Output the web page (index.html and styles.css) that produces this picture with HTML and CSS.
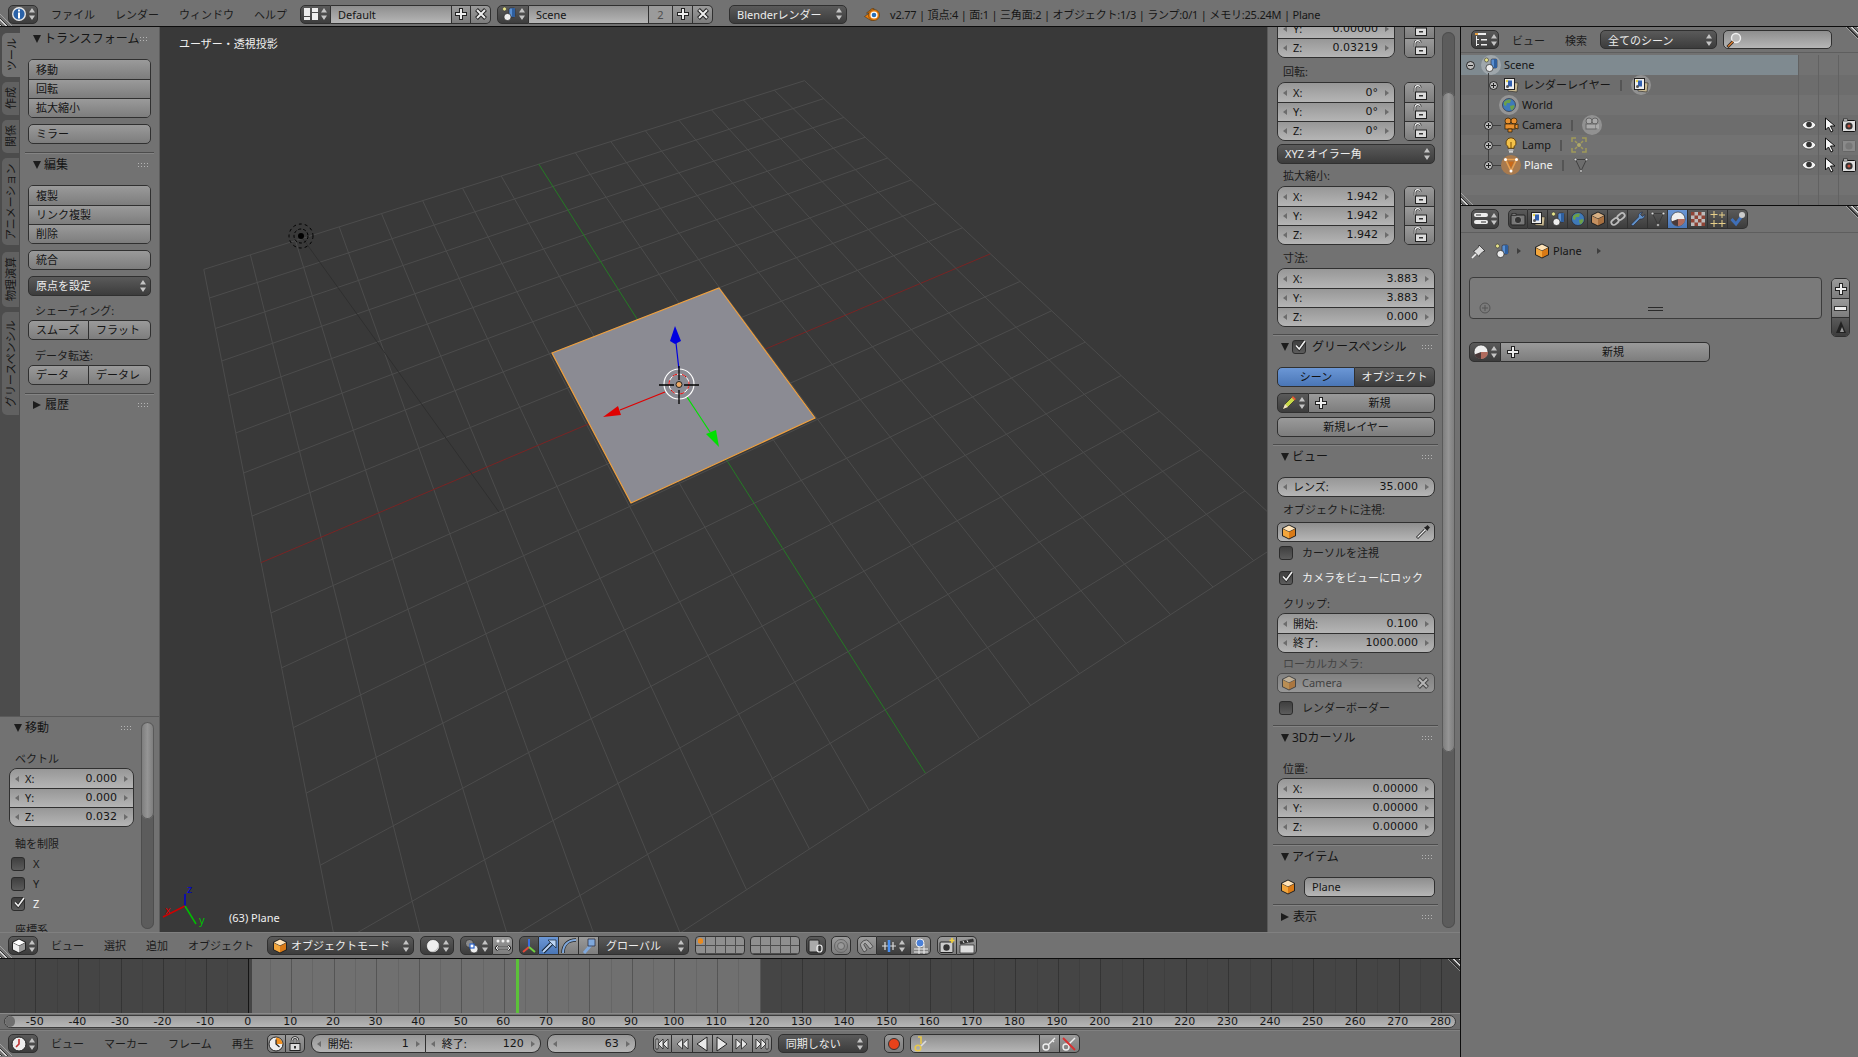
FILE: index.html
```html
<!DOCTYPE html>
<html lang="ja">
<head>
    <meta charset="UTF-8">
    <title>Blender</title>
    <link rel="stylesheet" href="styles.css">
</head>
<body>
<svg class="defs">
    <symbol id="ud" viewBox="0 0 8 14"><path fill="#c4c4c4" d="M4 1l3 4.5H1zM4 13L1 8.5h6z"/></symbol>
    <symbol id="info" viewBox="0 0 16 16"><circle cx="8" cy="8" r="7" fill="#e8e8e8"/><circle cx="8" cy="8" r="5.6" fill="#2a62a8"/><path fill="#fff" d="M7 3.5h2v2H7zM7 6.5h2v6H7z"/></symbol>
    <symbol id="layout" viewBox="0 0 16 16"><path fill="#eee" d="M1 2h6v8H1zM9 2h6v4H9zM9 7h6v7H9zM1 11h6v3H1z"/></symbol>
    <symbol id="scene" viewBox="0 0 16 16"><circle cx="3.5" cy="3" r="2" fill="#e8e48a" stroke="#333" stroke-width=".6"/><rect x="8" y="2" width="6" height="9" rx="1.5" fill="#5a8fd0" stroke="#223" stroke-width=".6"/><path fill="#2f5f9e" d="M11 2h3v9h-3z"/><circle cx="6.5" cy="11" r="3.6" fill="#eee" stroke="#222" stroke-width=".7"/></symbol>
    <symbol id="plus" viewBox="0 0 16 16"><path d="M8 2v12M2 8h12" stroke="#222" stroke-width="4"/><path d="M8 3v10M3 8h10" stroke="#eee" stroke-width="2"/></symbol>
    <symbol id="cross" viewBox="0 0 16 16"><path d="M3.5 3.5l9 9M12.5 3.5l-9 9" stroke="#222" stroke-width="4"/><path d="M4 4l8 8M12 4l-8 8" stroke="#eee" stroke-width="2"/></symbol>
    <symbol id="logo" viewBox="0 0 16 16"><path fill="#e87d0d" stroke="#3a2a10" stroke-width=".5" d="M.5 10.5L5.5 7H2.500L8 2.500h2v12H7z"/><circle cx="10" cy="9" r="5.5" fill="#e87d0d" stroke="#3a2a10" stroke-width=".5"/><circle cx="10" cy="9" r="3.6" fill="#fff"/><circle cx="10" cy="9" r="2.3" fill="#2a6fb8"/></symbol>
    <symbol id="cube" viewBox="0 0 16 16"><path fill="#222" d="M8 .5l7 3.5v8l-7 3.500-7-3.500V4z"/><path fill="#f3a63c" d="M2 5l6 3v6.500L2 11.500z"/><path fill="#d97a16" d="M14 5l-6 3v6.500l6-3z"/><path fill="#ffe3b8" d="M8 1.500L14 4.500 8 7.500 2 4.500z"/></symbol>
    <symbol id="view3d" viewBox="0 0 16 16"><path fill="#222" d="M8 .5l7 3.5v8l-7 3.500-7-3.500V4z"/><path fill="#eee" d="M2 5l6 3v6.500L2 11.500z"/><path fill="#999" d="M14 5l-6 3v6.500l6-3z"/><path fill="#fff" d="M8 1.500L14 4.500 8 7.500 2 4.500z"/></symbol>
    <symbol id="sphere" viewBox="0 0 16 16"><circle cx="8" cy="8" r="6.5" fill="#eee" stroke="#222" stroke-width=".6"/><path fill="#bbb" d="M13 4.500A6.500 6.500 0 0 1 4 13.100 7 7 0 0 0 13 4.500z"/></symbol>
    <symbol id="pivot" viewBox="0 0 16 16"><circle cx="5.5" cy="5.5" r="4" fill="#8a8a8a" stroke="#222" stroke-width=".6"/><circle cx="10" cy="11" r="4" fill="#eee" stroke="#222" stroke-width=".6"/><rect x="6" y="6" width="4" height="4" fill="#fff" stroke="#2a62c8" stroke-width="1.2"/></symbol>
    <symbol id="pivotrange" viewBox="0 0 16 16"><g fill="#eee"><circle cx="3" cy="3" r="1.5"/><circle cx="8" cy="3" r="1.5"/><circle cx="13" cy="3" r="1.5"/></g><path d="M1 10h14M3 8l-2 2 2 2M13 8l2 2-2 2" stroke="#222" stroke-width="2.5" fill="none"/><path d="M1 10h14M3 8l-2 2 2 2M13 8l2 2-2 2" stroke="#eee" stroke-width="1" fill="none"/></symbol>
    <symbol id="manxyz" viewBox="0 0 16 16"><path d="M8 9V1" stroke="#3a6fe0" stroke-width="2"/><path d="M8 9l-6 5" stroke="#e04a3a" stroke-width="2"/><path d="M8 9l6 5" stroke="#6fd040" stroke-width="2"/></symbol>
    <symbol id="manmove" viewBox="0 0 16 16"><path d="M2 14L12 4" stroke="#123" stroke-width="4"/><path d="M2 14L12 4" stroke="#bcd4f4" stroke-width="2"/><path fill="#bcd4f4" stroke="#123" stroke-width=".7" d="M7 2h8v8z"/></symbol>
    <symbol id="manrot" viewBox="0 0 16 16"><path d="M2 15C2 7 7 2 15 2" fill="none" stroke="#222" stroke-width="3.5"/><path d="M2 15C2 7 7 2 15 2" fill="none" stroke="#7fa8dc" stroke-width="2"/></symbol>
    <symbol id="manscale" viewBox="0 0 16 16"><path d="M3 15l7-8" stroke="#7fa8dc" stroke-width="3"/><path fill="#7fa8dc" stroke="#223" stroke-width=".7" d="M7 1h7v7H7z"/></symbol>
    <symbol id="unlock" viewBox="0 0 16 16"><path d="M3 7V3.500a2.800 2.800 0 0 1 5.500-.8" fill="none" stroke="#222" stroke-width="2.4"/><path d="M3 7V3.500a2.800 2.800 0 0 1 5.500-.8" fill="none" stroke="#eee" stroke-width="1.100"/><rect x="3.500" y="7" width="11" height="7.500" fill="#ddd" stroke="#222"/><path fill="#333" d="M7 10h4v1.500H7z"/></symbol>
    <symbol id="lock" viewBox="0 0 16 16"><path d="M5 8V4.500a3 3 0 0 1 6 0V8" fill="none" stroke="#222" stroke-width="2.4"/><path d="M5 8V4.500a3 3 0 0 1 6 0V8" fill="none" stroke="#eee" stroke-width="1"/><rect x="3" y="7.500" width="10" height="7" fill="#ddd" stroke="#222"/><path fill="#333" d="M7 10h2v2.500H7z"/></symbol>
    <symbol id="dropper" viewBox="0 0 16 16"><path d="M2 14l8-8" stroke="#222" stroke-width="3"/><path d="M2.500 13.500l8-8" stroke="#eee" stroke-width="1.200"/><path fill="#222" d="M9 3.500l2-1 1.500-1.500 2.500 2.500-1.500 1.500-1 2z"/></symbol>
    <symbol id="pencil" viewBox="0 0 16 16"><path d="M2 14l2-5 8-8 3 3-8 8z" fill="#c8d848" stroke="#2a2a2a" stroke-width=".7"/><path fill="#e05a3a" d="M12 1l3 3-1.500 1.500-3-3z"/><path fill="#f0e0c0" d="M2 14l2-5 3 3z"/></symbol>
    <symbol id="check" viewBox="0 0 14 14"><path d="M3 6.500l3.200 3.500L12 2" fill="none" stroke="#222" stroke-width="3.2"/><path d="M3 6.500l3.200 3.500L12 2" fill="none" stroke="#eee" stroke-width="1.7"/></symbol>
    <symbol id="eye" viewBox="0 0 16 16"><path fill="#f2f2f2" stroke="#222" stroke-width=".6" d="M1 8c2-3 4-4 7-4s5 1 7 4c-2 3-4 4-7 4s-5-1-7-4z"/><circle cx="8" cy="7.500" r="2.8" fill="#333"/></symbol>
    <symbol id="arrow" viewBox="0 0 16 16"><path fill="#f2f2f2" stroke="#111" d="M4.500 1v12l3-3 2.500 5 2-1-2.500-5H14z"/></symbol>
    <symbol id="camrend" viewBox="0 0 16 16"><rect x="1.500" y="3.500" width="13" height="11" rx="1" fill="#ddd" stroke="#111"/><rect x="2.500" y="2" width="4" height="2" fill="#ddd" stroke="#111" stroke-width=".6"/><circle cx="8" cy="9" r="3.6" fill="#333"/><circle cx="8" cy="9" r="1.6" fill="#c4523f"/></symbol>
    <symbol id="camoff" viewBox="0 0 16 16"><rect x="1.500" y="3.500" width="13" height="11" rx="1" fill="#8a8a8a" stroke="#666"/><circle cx="8" cy="9" r="3.6" fill="#777"/></symbol>
    <symbol id="globe" viewBox="0 0 16 16"><circle cx="8" cy="8" r="6.5" fill="#3f7ab8" stroke="#223" stroke-width=".6"/><path fill="#6ca04a" d="M3 5c2-2 5-3 7-2L9 6 6 6 5 9 3 8zM9 9l4-1 .5 2-2.500 3.500L9.500 12z"/></symbol>
    <symbol id="rlayer" viewBox="0 0 16 16"><path fill="#c8b890" stroke="#222" stroke-width=".6" d="M5 5l10 1-1 9-9-1z"/><rect x="1.500" y="1.500" width="10" height="11" fill="#eee" stroke="#222"/><path fill="#2f5fb0" d="M5 3.500h4v6H5z"/><circle cx="4" cy="4" r="1.2" fill="#e8d44a"/><circle cx="4.500" cy="9.500" r="1.5" fill="#555"/></symbol>
    <symbol id="cam3d" viewBox="0 0 16 16"><circle cx="5" cy="4" r="3" fill="#e89030" stroke="#2a1a00" stroke-width=".7"/><circle cx="11" cy="4" r="3" fill="#e89030" stroke="#2a1a00" stroke-width=".7"/><rect x="2" y="7" width="10" height="5" fill="#e89030" stroke="#2a1a00" stroke-width=".7"/><path fill="#e89030" stroke="#2a1a00" stroke-width=".7" d="M12 8l3-1v5l-3-1zM5 12h4v3H5z"/></symbol>
    <symbol id="lamp" viewBox="0 0 16 16"><path fill="#f4c24a" stroke="#4a2c00" stroke-width=".8" d="M8 .8a5 5 0 0 1 3 9v1.500H5V9.800a5 5 0 0 1 3-9z"/><path d="M5.500 13h5M6 14.800h4" stroke="#eee" stroke-width="1.2"/><path d="M8 5v6" stroke="#7a4c00"/></symbol>
    <symbol id="tri" viewBox="0 0 16 16"><path d="M2.500 2.500h11L8 14z" fill="none" stroke="#e8a050" stroke-width="1.6"/><path d="M5 4.500h6L8 11z" fill="#c96a1a"/><g fill="#fff"><circle cx="2.500" cy="2.500" r="1.5"/><circle cx="13.500" cy="2.500" r="1.5"/><circle cx="8" cy="14" r="1.5"/></g></symbol>
    <symbol id="trigrey" viewBox="0 0 16 16"><path d="M2.500 2.500h11L8 14z" fill="none" stroke="#333" stroke-width=".8"/><g fill="#ddd" stroke="#333" stroke-width=".5"><circle cx="2.500" cy="2.500" r="1.3"/><circle cx="13.500" cy="2.500" r="1.3"/><circle cx="8" cy="14" r="1.3"/></g></symbol>
    <symbol id="lampdata" viewBox="0 0 16 16"><g stroke="#a09a5a" stroke-width="1.5" fill="none"><path d="M1 5V1h4M11 1h4v4M1 11v4h4M15 11v4h-4"/><path d="M4 4l2 2M12 4l-2 2M4 12l2-2M12 12l-2-2"/></g><circle cx="8" cy="8" r="2" fill="#b0aa6a"/></symbol>
    <symbol id="camdata" viewBox="0 0 16 16"><circle cx="5" cy="4" r="3" fill="#aaa" stroke="#666"/><circle cx="11" cy="4" r="3" fill="#aaa" stroke="#666"/><rect x="2" y="7" width="10" height="5" fill="#aaa" stroke="#666"/><path fill="#aaa" d="M12 8l3-1v5l-3-1z"/></symbol>
    <symbol id="outliner" viewBox="0 0 16 16"><path fill="#eee" d="M2 1h11v2H2zM3 4h1v10H3z"/><path fill="#eee" d="M4 7h2v1H4zM8 7h6v1.500H8zM4 12h2v1H4zM8 12h6v1.500H8z"/><path fill="#e8a040" d="M2 1h3v2H2z"/></symbol>
    <symbol id="search" viewBox="0 0 16 16"><circle cx="10" cy="6" r="4.5" fill="#b8b8b8" stroke="#eee" stroke-width="1.4"/><path d="M7 9.500L1.500 15" stroke="#222" stroke-width="3"/><path d="M7 9.500L2 14.500" stroke="#d87a30" stroke-width="1.6"/></symbol>
    <symbol id="props" viewBox="0 0 16 16"><rect x="1" y="2" width="14" height="4" rx="2" fill="#eee"/><rect x="1" y="9" width="14" height="4" rx="2" fill="#eee"/><path fill="#333" d="M3 3.500h5v1H3zM8 10.500h5v1H8z"/></symbol>
    <symbol id="pcam" viewBox="0 0 16 16"><rect x="1" y="4" width="14" height="10" rx="1" fill="#777" stroke="#222"/><rect x="2" y="2.500" width="4" height="2" fill="#777" stroke="#222" stroke-width=".6"/><circle cx="8" cy="9" r="3.6" fill="#333" stroke="#aaa" stroke-width=".6"/></symbol>
    <symbol id="pcube" viewBox="0 0 16 16"><path fill="#222" d="M8 .5l7 3.5v8l-7 3.500-7-3.500V4z"/><path fill="#c49060" d="M2 5l6 3v6.500L2 11.500z"/><path fill="#a87040" d="M14 5l-6 3v6.500l6-3z"/><path fill="#d8b084" d="M8 1.500L14 4.500 8 7.500 2 4.500z"/></symbol>
    <symbol id="link" viewBox="0 0 16 16"><g fill="none" stroke="#bbb" stroke-width="1.8"><rect x="1" y="8" width="8" height="5" rx="2.5" transform="rotate(-40 5 10.500)"/><rect x="7" y="3" width="8" height="5" rx="2.5" transform="rotate(-40 11 5.500)"/></g></symbol>
    <symbol id="wrench" viewBox="0 0 16 16"><path fill="#5f90c8" stroke="#223" stroke-width=".6" d="M1 13.500l7.500-7.500C8 4 9 1.500 12.500 1L10.500 3.500l2 2 2.500-2C15 7 12 8.500 10 8l-7 7z"/></symbol>
    <symbol id="material" viewBox="0 0 16 16"><circle cx="8" cy="8" r="7" fill="#eee" stroke="#222" stroke-width=".6"/><path fill="#b06a5c" d="M8 8h7a7 7 0 0 1-7 7z"/><path fill="#4a3a3a" d="M8 8v7a7 7 0 0 1-6.500-4.500z"/></symbol>
    <symbol id="checker" viewBox="0 0 16 16"><path fill="#bbb" d="M1 1h14v14H1z"/><path fill="#8f4436" d="M1 1h3.500v3.500H1zM8 1h3.500v3.500H8zM4.500 4.500H8V8H4.500zM11.500 4.500H15V8h-3.500zM1 8h3.500v3.500H1zM8 8h3.500v3.500H8zM4.500 11.500H8V15H4.500zM11.500 11.500H15V15h-3.500z"/></symbol>
    <symbol id="sparks" viewBox="0 0 16 16"><path d="M4 0v7M.5 3.500h7M12 1v6M9 4h6M4 9v7M.5 12.500h7M12 9v7M8.500 12.500h7" stroke="#e8d08a" stroke-width="1"/></symbol>
    <symbol id="bone" viewBox="0 0 16 16"><path d="M1.500 8l4.500 5 6-8" fill="none" stroke="#3f6fb8" stroke-width="3"/><circle cx="12" cy="4" r="3" fill="#ccc"/></symbol>
    <symbol id="pin" viewBox="0 0 16 16"><path d="M1 15l5-5" stroke="#eee" stroke-width="1.6"/><path fill="#ddd" stroke="#222" stroke-width=".7" d="M8 2l6 6-2 .5-3 3-1 2L2.500 8l2-1 3-3z"/></symbol>
    <symbol id="mouse" viewBox="0 0 16 16"><path fill="#222" d="M3 14L8 2l5 12z"/><path fill="#999" d="M9 8l2 5H7z"/></symbol>
    <symbol id="clock" viewBox="0 0 16 16"><circle cx="8" cy="8" r="7" fill="#eee" stroke="#222"/><path fill="#f09020" d="M8 8V1.500A6.500 6.500 0 0 1 14.500 8z"/><path d="M8 3.500V8l3.500 3" fill="none" stroke="#222" stroke-width="1.2"/></symbol>
    <symbol id="clockred" viewBox="0 0 16 16"><circle cx="8" cy="8" r="7" fill="#eee" stroke="#222"/><path d="M8 3v5l-3 3" fill="none" stroke="#c03030" stroke-width="1.6"/></symbol>
    <symbol id="jumpstart" viewBox="0 0 16 16"><path fill="#e8e8e8" stroke="#222" stroke-width=".8" d="M2 3h2v10H2zM14 3v10L9 8zM9 3v10L4 8z"/></symbol>
    <symbol id="rewind" viewBox="0 0 16 16"><path fill="#e8e8e8" stroke="#222" stroke-width=".8" d="M14 3v10L8.500 8zM8.500 3v10L3 8z"/></symbol>
    <symbol id="playrev" viewBox="0 0 16 16"><path fill="#e8e8e8" stroke="#222" d="M13 1v14L3 8z"/></symbol>
    <symbol id="play" viewBox="0 0 16 16"><path fill="#e8e8e8" stroke="#222" d="M3 1v14l10-7z"/></symbol>
    <symbol id="forward" viewBox="0 0 16 16"><path fill="#e8e8e8" stroke="#222" stroke-width=".8" d="M2 3v10l5.500-5zM7.500 3v10L13 8z"/></symbol>
    <symbol id="jumpend" viewBox="0 0 16 16"><path fill="#e8e8e8" stroke="#222" stroke-width=".8" d="M12 3h2v10h-2zM2 3v10l5-5zM7 3v10l5-5z"/></symbol>
    <symbol id="rec" viewBox="0 0 16 16"><circle cx="8" cy="8" r="5.5" fill="#e8421a" stroke="#333"/></symbol>
    <symbol id="keygold" viewBox="0 0 16 16"><path d="M5 1h3v7" fill="none" stroke="#e8c84a" stroke-width="1.6"/><circle cx="5" cy="12" r="2.8" fill="none" stroke="#e8c84a" stroke-width="1.6"/><path d="M8 10l5-5" stroke="#ddd" stroke-width="1.6"/></symbol>
    <symbol id="key" viewBox="0 0 16 16"><circle cx="5" cy="11" r="3" fill="none" stroke="#eee" stroke-width="1.4"/><path d="M7 9l7-7M11 4l2 2" stroke="#eee" stroke-width="1.4"/></symbol>
    <symbol id="keyx" viewBox="0 0 16 16"><circle cx="5" cy="11" r="3" fill="none" stroke="#eee" stroke-width="1.4"/><path d="M7 9l7-7" stroke="#eee" stroke-width="1.4"/><path d="M2 2l12 12" stroke="#d83030" stroke-width="2"/></symbol>
    <symbol id="camlock" viewBox="0 0 16 16"><rect x="1" y="2" width="10" height="12" rx="1" fill="#aaa" stroke="#222"/><rect x="9" y="7" width="5" height="7" rx="2.5" fill="none" stroke="#eee" stroke-width="1.2"/></symbol>
    <symbol id="occlude" viewBox="0 0 16 16"><circle cx="8" cy="8" r="6.5" fill="none" stroke="#666"/><circle cx="8" cy="8" r="3.5" fill="#999" stroke="#666"/></symbol>
    <symbol id="magnet" viewBox="0 0 16 16"><path d="M5 14L2 9a4 4 0 0 1 1-5l2-1.500a4 4 0 0 1 5 1l4 5-3 2.500-4-5a1 1 0 0 0-2 1l3 5z" fill="#aaa" stroke="#333" stroke-width=".7"/></symbol>
    <symbol id="snapmode" viewBox="0 0 16 16"><path d="M1 8h14" stroke="#ddd"/><path d="M4 4v8M12 4v8" stroke="#ddd" stroke-width="1.2"/><path d="M8 2v12" stroke="#4a90f0" stroke-width="2.5"/></symbol>
    <symbol id="snapgrid" viewBox="0 0 16 16"><path d="M1 11h14M1 14h14M6 6v10M11 6v10" stroke="#eee"/><circle cx="7" cy="5" r="4" fill="#4a80d8" stroke="#eee"/></symbol>
    <symbol id="renderimg" viewBox="0 0 16 16"><rect x="1" y="4" width="13" height="10.500" rx="1" fill="#ccc" stroke="#222"/><circle cx="7.500" cy="9.500" r="3.2" fill="#333"/><path d="M13 0v5M10.500 2.500h5" stroke="#f0d040" stroke-width="1.6"/></symbol>
    <symbol id="renderanim" viewBox="0 0 16 16"><path fill="#ddd" stroke="#222" stroke-width=".7" d="M1 7h14v8H1z"/><path fill="#333" stroke="#222" stroke-width=".5" d="M1 3.500L14 1l.5 2.500L1.500 6z"/><path d="M4 3l1 2M8 2.300l1 2" stroke="#eee"/></symbol>
    <symbol id="addsm" viewBox="0 0 12 12"><circle cx="6" cy="6" r="5" fill="none" stroke="#555"/><path d="M6 3v6M3 6h6" stroke="#555"/></symbol>
</svg>

<header class="hdr top">
    <span class="corner bl"></span>
    <div class="wg dark w30 ed"><svg class="ic"><use href="#info"/></svg><svg class="ud"><use href="#ud"/></svg></div>
    <nav class="menu"><span>ファイル</span><span>レンダー</span><span>ウィンドウ</span><span>ヘルプ</span></nav>
    <div class="group">
        <div class="wg dark w31 ed"><svg class="ic"><use href="#layout"/></svg><svg class="ud"><use href="#ud"/></svg></div>
        <div class="wg field w121 pad"><span>Default</span></div>
        <div class="wg tool w19 ctr"><svg class="ic"><use href="#plus"/></svg></div>
        <div class="wg tool w20 ctr"><svg class="ic"><use href="#cross"/></svg></div>
    </div>
    <div class="group ml6">
        <div class="wg dark w32 ed"><svg class="ic"><use href="#scene"/></svg><svg class="ud"><use href="#ud"/></svg></div>
        <div class="wg field w120 pad"><span>Scene</span></div>
        <div class="wg field w24 ctr users"><span>2</span></div>
        <div class="wg tool w20 ctr"><svg class="ic"><use href="#plus"/></svg></div>
        <div class="wg tool w20 ctr"><svg class="ic"><use href="#cross"/></svg></div>
    </div>
    <div class="wg dark dd w118 ml16"><span>Blenderレンダー</span><svg class="ud"><use href="#ud"/></svg></div>
    <svg class="ic logo"><use href="#logo"/></svg>
    <span class="status">v2.77 | 頂点:4 | 面:1 | 三角面:2 | オブジェクト:1/3 | ランプ:0/1 | メモリ:25.24M | Plane</span>
</header>

<div class="workspace">
    <div class="left">
        <div class="main">
            <div class="tools">
                <div class="tools-top">
                    <div class="tabs">
                        <span class="tab on h44">ツール</span>
                        <span class="tab h33">作成</span>
                        <span class="tab h33">関係</span>
                        <span class="tab h87">アニメーション</span>
                        <span class="tab h55 g7">物理演算</span>
                        <span class="tab h103">グリースペンシル</span>
                    </div>
                    <div class="tpanel">
                        <div class="ph first"><i class="arr"></i><b>トランスフォーム</b><i class="grip"></i></div>
                        <div class="col">
                            <div class="row tool">移動</div>
                            <div class="row tool">回転</div>
                            <div class="row tool">拡大縮小</div>
                        </div>
                        <div class="wg tool pad mt6">ミラー</div>
                        <div class="sep"></div>
                        <div class="ph"><i class="arr"></i><b>編集</b><i class="grip"></i></div>
                        <div class="col">
                            <div class="row tool">複製</div>
                            <div class="row tool">リンク複製</div>
                            <div class="row tool">削除</div>
                        </div>
                        <div class="wg tool pad mt6">統合</div>
                        <div class="wg dark dd mt6"><span>原点を設定</span><svg class="ud"><use href="#ud"/></svg></div>
                        <div class="lbl mt8 mb2">シェーディング:</div>
                        <div class="group">
                            <div class="wg tool pad w61">スムーズ</div>
                            <div class="wg tool pad fill">フラット</div>
                        </div>
                        <div class="lbl mt9 mb2">データ転送:</div>
                        <div class="group">
                            <div class="wg tool pad w61">データ</div>
                            <div class="wg tool pad fill">データレ</div>
                        </div>
                        <div class="sep"></div>
                        <div class="ph last"><i class="arr closed"></i><b>履歴</b><i class="grip"></i></div>
                    </div>
                </div>
                <div class="redo">
                    <span class="scroll redo-scroll"><i class="thumb"></i></span>
                    <div class="ph"><i class="arr"></i><b>移動</b><i class="grip"></i></div>
                    <div class="lbl mt13 mb2">ベクトル</div>
                    <div class="col round">
                        <div class="row num"><span class="lab">X:</span><span class="val">0.000</span></div>
                        <div class="row num"><span class="lab">Y:</span><span class="val">0.000</span></div>
                        <div class="row num"><span class="lab">Z:</span><span class="val">0.032</span></div>
                    </div>
                    <div class="lbl mt10 mb3">軸を制限</div>
                    <div class="cbrow"><span class="cb"></span><span>X</span></div>
                    <div class="cbrow"><span class="cb"></span><span>Y</span></div>
                    <div class="cbrow lit"><span class="cb"><svg><use href="#check"/></svg></span><span>Z</span></div>
                    <div class="lbl mt9">座標系</div>
                </div>
            </div>

            <div class="viewport">
                <svg class="scene3d" viewBox="160 27 1108 905">
                    <g id="grid"></g>
                    <g class="lampobj">
                        <path d="M301 236L499 512" stroke="#2f2f2f" fill="none"/>
                        <circle cx="301" cy="236" r="3" fill="#000"/>
                        <circle cx="301" cy="236" r="7" fill="none" stroke="#000" stroke-dasharray="3 2"/>
                        <circle cx="301" cy="236" r="12" fill="none" stroke="#000" stroke-dasharray="3 3"/>
                    </g>
                    <path d="M719 288L815 418 631 503 552 353z" fill="#8b8b93" stroke="#f1a13e" stroke-width="1.2"/>
                    <path d="M679 370L676 343" stroke="#0000e0" stroke-width="1.2"/>
                    <path fill="#0000e0" d="M675 326L681 341 675 344 670 341z"/>
                    <path d="M665 392L620 410" stroke="#e00000" stroke-width="1.2"/>
                    <path fill="#e00000" d="M603 417L618 406 621 415z"/>
                    <path d="M687 397L710 432" stroke="#00e000" stroke-width="1.2"/>
                    <path fill="#00e000" d="M719 447L706 434 716 430z"/>
                    <circle cx="679" cy="384" r="15" fill="none" stroke="#fff" stroke-width="1.2"/>
                    <circle cx="679" cy="384" r="10" fill="none" stroke="#fff"/>
                    <circle cx="679" cy="384" r="10" fill="none" stroke="#e00000" stroke-dasharray="5 5"/>
                    <path d="M659 385h15M684 385h15M679 366v14M679 390v14" stroke="#000" stroke-width="1.3"/>
                    <circle cx="679" cy="384.500" r="3" fill="#eeaa66" stroke="#222"/>
                    <path d="M185 906V894" stroke="#0000d0" stroke-width="1.5"/>
                    <path d="M185 906L163 917" stroke="#d00000" stroke-width="1.5"/>
                    <path d="M185 906L196 924" stroke="#00c000" stroke-width="1.5"/>
                    <text class="axl" x="187" y="893" fill="#0000d0">z</text>
                    <text class="axl" x="165" y="914" fill="#d00000">x</text>
                    <text class="axl" x="199" y="924" fill="#00c000">y</text>
                </svg>
                <span class="vp-title">ユーザー・透視投影</span>
                <span class="vp-obj">(63) Plane</span>
            </div>

            <aside class="npanel">
                <span class="scroll n-scroll"><i class="thumb"></i></span>
                <div class="xf first">
                    <div class="col round">
                        <div class="row num"><span class="lab">Y:</span><span class="val">0.00000</span></div>
                        <div class="row num"><span class="lab">Z:</span><span class="val">0.03219</span></div>
                    </div>
                    <div class="col">
                        <div class="row tool ctr"><svg class="ic"><use href="#unlock"/></svg></div>
                        <div class="row tool ctr"><svg class="ic"><use href="#unlock"/></svg></div>
                    </div>
                </div>
                <div class="lbl nl">回転:</div>
                <div class="xf">
                    <div class="col round">
                        <div class="row num"><span class="lab">X:</span><span class="val">0°</span></div>
                        <div class="row num"><span class="lab">Y:</span><span class="val">0°</span></div>
                        <div class="row num"><span class="lab">Z:</span><span class="val">0°</span></div>
                    </div>
                    <div class="col">
                        <div class="row tool ctr"><svg class="ic"><use href="#unlock"/></svg></div>
                        <div class="row tool ctr"><svg class="ic"><use href="#unlock"/></svg></div>
                        <div class="row tool ctr"><svg class="ic"><use href="#unlock"/></svg></div>
                    </div>
                </div>
                <div class="wg dark dd mt3"><span>XYZ オイラー角</span><svg class="ud"><use href="#ud"/></svg></div>
                <div class="lbl nl tight">拡大縮小:</div>
                <div class="xf">
                    <div class="col round">
                        <div class="row num"><span class="lab">X:</span><span class="val">1.942</span></div>
                        <div class="row num"><span class="lab">Y:</span><span class="val">1.942</span></div>
                        <div class="row num"><span class="lab">Z:</span><span class="val">1.942</span></div>
                    </div>
                    <div class="col">
                        <div class="row tool ctr"><svg class="ic"><use href="#unlock"/></svg></div>
                        <div class="row tool ctr"><svg class="ic"><use href="#unlock"/></svg></div>
                        <div class="row tool ctr"><svg class="ic"><use href="#unlock"/></svg></div>
                    </div>
                </div>
                <div class="lbl nl mt6">寸法:</div>
                <div class="col round">
                    <div class="row num"><span class="lab">X:</span><span class="val">3.883</span></div>
                    <div class="row num"><span class="lab">Y:</span><span class="val">3.883</span></div>
                    <div class="row num"><span class="lab">Z:</span><span class="val">0.000</span></div>
                </div>

                <div class="sep ns"></div>
                <div class="ph nh"><i class="arr"></i><span class="cb hcb"><svg><use href="#check"/></svg></span><b>グリースペンシル</b><i class="grip"></i></div>
                <div class="group">
                    <div class="wg blue ctr w78">シーン</div>
                    <div class="wg dark ctr fill">オブジェクト</div>
                </div>
                <div class="group mt6">
                    <div class="wg dark w32 ed"><svg class="ic"><use href="#pencil"/></svg><svg class="ud"><use href="#ud"/></svg></div>
                    <div class="wg tool fill addnew"><svg class="ic"><use href="#plus"/></svg><span>新規</span></div>
                </div>
                <div class="wg tool ctr mt4">新規レイヤー</div>

                <div class="sep ns"></div>
                <div class="ph nh"><i class="arr"></i><b>ビュー</b><i class="grip"></i></div>
                <div class="wg num single"><span class="lab">レンズ:</span><span class="val">35.000</span></div>
                <div class="lbl nl mt6 mb5">オブジェクトに注視:</div>
                <div class="wg field picker"><svg class="ic"><use href="#cube"/></svg><svg class="ic"><use href="#dropper"/></svg></div>
                <div class="cbrow nc mt1"><span class="cb"></span><span>カーソルを注視</span></div>
                <div class="cbrow nc lit mt5"><span class="cb"><svg><use href="#check"/></svg></span><span>カメラをビューにロック</span></div>
                <div class="lbl nl mt9 mb2">クリップ:</div>
                <div class="col round">
                    <div class="row num"><span class="lab">開始:</span><span class="val">0.100</span></div>
                    <div class="row num"><span class="lab">終了:</span><span class="val">1000.000</span></div>
                </div>
                <div class="lbl nl off mt4 mb2">ローカルカメラ:</div>
                <div class="wg field picker off"><svg class="ic"><use href="#cube"/></svg><span class="pick-name">Camera</span><svg class="ic"><use href="#cross"/></svg></div>
                <div class="cbrow nc mt5"><span class="cb"></span><span>レンダーボーダー</span></div>

                <div class="sep ns"></div>
                <div class="ph nh"><i class="arr"></i><b>3Dカーソル</b><i class="grip"></i></div>
                <div class="lbl nl mt13 mb2">位置:</div>
                <div class="col round">
                    <div class="row num"><span class="lab">X:</span><span class="val">0.00000</span></div>
                    <div class="row num"><span class="lab">Y:</span><span class="val">0.00000</span></div>
                    <div class="row num"><span class="lab">Z:</span><span class="val">0.00000</span></div>
                </div>

                <div class="sep ns"></div>
                <div class="ph nh"><i class="arr"></i><b>アイテム</b><i class="grip"></i></div>
                <div class="item"><svg class="ic"><use href="#cube"/></svg><div class="wg field pad fill">Plane</div></div>

                <div class="sep ns"></div>
                <div class="ph nh"><i class="arr closed"></i><b>表示</b><i class="grip"></i></div>
                <div class="sep ns near"></div>
            </aside>
        </div>

        <div class="hdr h3d">
            <span class="corner bl"></span>
            <div class="wg dark w30 ed"><svg class="ic"><use href="#view3d"/></svg><svg class="ud"><use href="#ud"/></svg></div>
            <nav class="menu"><span>ビュー</span><span>選択</span><span>追加</span><span>オブジェクト</span></nav>
            <div class="wg dark dd w147 modesel"><svg class="ic"><use href="#cube"/></svg><span>オブジェクトモード</span><svg class="ud"><use href="#ud"/></svg></div>
            <div class="wg dark w34 ed ml6"><svg class="ic"><use href="#sphere"/></svg><svg class="ud"><use href="#ud"/></svg></div>
            <div class="group ml6">
                <div class="wg dark w33 ed"><svg class="ic"><use href="#pivot"/></svg><svg class="ud"><use href="#ud"/></svg></div>
                <div class="wg tool w20 ctr"><svg class="ic"><use href="#pivotrange"/></svg></div>
            </div>
            <div class="group ml6">
                <div class="wg dark w20 ctr"><svg class="ic"><use href="#manxyz"/></svg></div>
                <div class="wg blue w20 ctr"><svg class="ic"><use href="#manmove"/></svg></div>
                <div class="wg tool w20 ctr"><svg class="ic"><use href="#manrot"/></svg></div>
                <div class="wg tool w20 ctr"><svg class="ic"><use href="#manscale"/></svg></div>
                <div class="wg dark dd w90"><span>グローバル</span><svg class="ud"><use href="#ud"/></svg></div>
            </div>
            <div class="layers ml6"><i class="has"></i><i></i><i></i><i></i><i></i><i></i><i></i><i></i><i></i><i></i></div>
            <div class="layers ml5"><i></i><i></i><i></i><i></i><i></i><i></i><i></i><i></i><i></i><i></i></div>
            <div class="wg dark w20 ctr ml6"><svg class="ic"><use href="#camlock"/></svg></div>
            <div class="wg tool w20 ctr ml5"><svg class="ic"><use href="#occlude"/></svg></div>
            <div class="group ml6">
                <div class="wg tool w20 ctr"><svg class="ic"><use href="#magnet"/></svg></div>
                <div class="wg dark w34 ed"><svg class="ic"><use href="#snapmode"/></svg><svg class="ud"><use href="#ud"/></svg></div>
                <div class="wg tool w20 ctr"><svg class="ic"><use href="#snapgrid"/></svg></div>
            </div>
            <div class="group ml6">
                <div class="wg tool w20 ctr"><svg class="ic"><use href="#renderimg"/></svg></div>
                <div class="wg tool w20 ctr"><svg class="ic"><use href="#renderanim"/></svg></div>
            </div>
        </div>

        <div class="timeline"><i class="playhead"></i><span class="corner tr"></span></div>
        <div class="ruler">
            <div class="pill"><i class="knob"></i>
                <span>-50</span><span>-40</span><span>-30</span><span>-20</span><span>-10</span><span>0</span><span>10</span><span>20</span><span>30</span><span>40</span><span>50</span><span>60</span><span>70</span><span>80</span><span>90</span><span>100</span><span>110</span><span>120</span><span>130</span><span>140</span><span>150</span><span>160</span><span>170</span><span>180</span><span>190</span><span>200</span><span>210</span><span>220</span><span>230</span><span>240</span><span>250</span><span>260</span><span>270</span><span>280</span>
            </div>
        </div>
        <div class="hdr htl">
            <span class="corner bl"></span>
            <div class="wg dark w30 ed"><svg class="ic"><use href="#clockred"/></svg><svg class="ud"><use href="#ud"/></svg></div>
            <nav class="menu"><span>ビュー</span><span>マーカー</span><span>フレーム</span><span>再生</span></nav>
            <div class="group">
                <div class="wg tool w19 ctr"><svg class="ic"><use href="#clock"/></svg></div>
                <div class="wg tool w19 ctr"><svg class="ic"><use href="#lock"/></svg></div>
            </div>
            <div class="group ml6 col-frames">
                <div class="wg num w115"><span class="lab">開始:</span><span class="val">1</span></div>
                <div class="wg num w115"><span class="lab">終了:</span><span class="val">120</span></div>
            </div>
            <div class="wg num single w89 ml6"><span class="val">63</span></div>
            <div class="group transport">
                <div class="wg tool w19 ctr"><svg class="ic"><use href="#jumpstart"/></svg></div>
                <div class="wg tool w21 ctr"><svg class="ic"><use href="#rewind"/></svg></div>
                <div class="wg tool w20 ctr"><svg class="ic"><use href="#playrev"/></svg></div>
                <div class="wg tool w20 ctr"><svg class="ic"><use href="#play"/></svg></div>
                <div class="wg tool w20 ctr"><svg class="ic"><use href="#forward"/></svg></div>
                <div class="wg tool w19 ctr"><svg class="ic"><use href="#jumpend"/></svg></div>
            </div>
            <div class="wg dark dd w90 ml6"><span>同期しない</span><svg class="ud"><use href="#ud"/></svg></div>
            <div class="wg tool w20 ctr ml16"><svg class="ic"><use href="#rec"/></svg></div>
            <div class="group ml6">
                <div class="wg field w130 keyset"><svg class="ic"><use href="#keygold"/></svg></div>
                <div class="wg tool w20 ctr"><svg class="ic"><use href="#key"/></svg></div>
                <div class="wg tool w20 ctr"><svg class="ic"><use href="#keyx"/></svg></div>
            </div>
        </div>
    </div>

    <div class="right">
        <section class="outliner">
            <span class="corner bl"></span>
            <span class="corner tr"></span>
            <div class="hdr hout">
                <div class="wg dark w28 ed"><svg class="ic"><use href="#outliner"/></svg><svg class="ud"><use href="#ud"/></svg></div>
                <nav class="menu"><span>ビュー</span><span>検索</span></nav>
                <div class="wg dark dd w117"><span>全てのシーン</span><svg class="ud"><use href="#ud"/></svg></div>
                <div class="wg field w109 ml6 searchbox"><svg class="ic"><use href="#search"/></svg></div>
            </div>
            <div class="rows">
                <span class="treeline"></span>
                <div class="orow"><div class="oname sel l-scene"><span class="exp minus"></span><span class="halo"><svg class="ic"><use href="#scene"/></svg></span><span>Scene</span></div><i></i><i></i><i></i></div>
                <div class="orow alt"><div class="oname l-rl"><span class="exp"></span><svg class="ic"><use href="#rlayer"/></svg><span>レンダーレイヤー</span><b class="bar"></b><span class="halo"><svg class="ic"><use href="#rlayer"/></svg></span></div><i></i><i></i><i></i></div>
                <div class="orow"><div class="oname l-world"><span class="halo"><svg class="ic"><use href="#globe"/></svg></span><span>World</span></div><i></i><i></i><i></i></div>
                <div class="orow alt"><div class="oname l-obj"><span class="exp"></span><svg class="ic"><use href="#cam3d"/></svg><span>Camera</span><b class="bar"></b><span class="halo"><svg class="ic"><use href="#camdata"/></svg></span></div><i><svg class="ic"><use href="#eye"/></svg></i><i><svg class="ic"><use href="#arrow"/></svg></i><i><svg class="ic"><use href="#camrend"/></svg></i></div>
                <div class="orow"><div class="oname l-obj"><span class="exp"></span><svg class="ic"><use href="#lamp"/></svg><span>Lamp</span><b class="bar"></b><svg class="ic"><use href="#lampdata"/></svg></div><i><svg class="ic"><use href="#eye"/></svg></i><i><svg class="ic"><use href="#arrow"/></svg></i><i><svg class="ic"><use href="#camoff"/></svg></i></div>
                <div class="orow alt"><div class="oname l-obj"><span class="exp"></span><span class="halo orange"><svg class="ic"><use href="#tri"/></svg></span><span class="white">Plane</span><b class="bar"></b><svg class="ic"><use href="#trigrey"/></svg></div><i><svg class="ic"><use href="#eye"/></svg></i><i><svg class="ic"><use href="#arrow"/></svg></i><i><svg class="ic"><use href="#camrend"/></svg></i></div>
                <div class="orow"><div class="oname"></div><i></i><i></i><i></i></div>
                <div class="orow alt"><div class="oname"></div><i></i><i></i><i></i></div>
            </div>
        </section>

        <section class="props">
            <span class="corner tr"></span>
            <div class="hdr hprops">
                <div class="wg dark w28 ed"><svg class="ic"><use href="#props"/></svg><svg class="ud"><use href="#ud"/></svg></div>
                <div class="group ptabs">
                    <div class="wg dark w20 ctr"><svg class="ic"><use href="#pcam"/></svg></div>
                    <div class="wg dark w20 ctr"><svg class="ic"><use href="#rlayer"/></svg></div>
                    <div class="wg dark w20 ctr"><svg class="ic"><use href="#scene"/></svg></div>
                    <div class="wg dark w20 ctr"><svg class="ic"><use href="#globe"/></svg></div>
                    <div class="wg dark w20 ctr"><svg class="ic"><use href="#pcube"/></svg></div>
                    <div class="wg dark w20 ctr"><svg class="ic"><use href="#link"/></svg></div>
                    <div class="wg dark w20 ctr"><svg class="ic"><use href="#wrench"/></svg></div>
                    <div class="wg dark w20 ctr"><svg class="ic"><use href="#trigrey"/></svg></div>
                    <div class="wg blue w20 ctr"><svg class="ic"><use href="#material"/></svg></div>
                    <div class="wg dark w20 ctr"><svg class="ic"><use href="#checker"/></svg></div>
                    <div class="wg dark w20 ctr"><svg class="ic"><use href="#sparks"/></svg></div>
                    <div class="wg dark w20 ctr"><svg class="ic"><use href="#bone"/></svg></div>
                </div>
            </div>
            <div class="crumbs">
                <svg class="ic"><use href="#pin"/></svg>
                <svg class="ic cr-scene"><use href="#scene"/></svg>
                <i class="crumb-arr"></i>
                <svg class="ic cr-cube"><use href="#cube"/></svg>
                <span>Plane</span>
                <i class="crumb-arr cr-last"></i>
            </div>
            <div class="slots">
                <div class="slotlist">
                    <svg class="addsm"><use href="#addsm"/></svg>
                    <i class="dbl"></i>
                </div>
                <div class="col slotbtns">
                    <div class="row tool ctr"><svg class="ic"><use href="#plus"/></svg></div>
                    <div class="row tool ctr minus-btn"><i></i></div>
                    <div class="row dark ctr"><svg class="ic"><use href="#mouse"/></svg></div>
                </div>
            </div>
            <div class="group newmat">
                <div class="wg dark w32 ed"><svg class="ic"><use href="#material"/></svg><svg class="ud"><use href="#ud"/></svg></div>
                <div class="wg tool fill addnew"><svg class="ic"><use href="#plus"/></svg><span>新規</span></div>
            </div>
        </section>
    </div>
</div>
<script src="grid.js"></script>
</body>
</html>
```

FILE: styles.css
```css
* {
    box-sizing: border-box;
}

html, body {
    margin: 0;
}

body {
    width: 1858px;
    height: 1057px;
    overflow: hidden;
    background-color: #727272;
    color: #151515;
    font: 11px/14px "Noto Sans", "Noto Sans CJK JP", sans-serif;
}

.defs {
    position: absolute;
    width: 0;
    height: 0;
}

i, b {
    font-style: normal;
    font-weight: normal;
}

.ic {
    width: 16px;
    height: 16px;
    flex: none;
}

.ud {
    width: 8px;
    height: 14px;
    flex: none;
}

/* headers */
.hdr {
    position: relative;
    display: flex;
    align-items: center;
    height: 26px;
    padding-left: 8px;
    background-color: #727272;
    border-top: 1px solid #808080;
    flex: none;
}

.top {
    height: 27px;
    padding-top: 2px;
    border-top: none;
    border-bottom: 1px solid #0c0c0c;
}

.top .menu span, .top .wg > span, .top .status,
.hout .menu span, .hout .dd span {
    padding-top: 2px;
}

.menu {
    display: flex;
    gap: 20px;
    margin: 0 13px;
}

.menu span {
    color: #1c1c1c;
}

.status {
    margin-left: 10px;
    white-space: nowrap;
    color: #161616;
    letter-spacing: -.2px;
}

.logo {
    margin-left: 17px;
}

.corner {
    position: absolute;
    width: 12px;
    height: 12px;
    background: repeating-linear-gradient(45deg, #d0d0d0 0 1px, #303030 1px 2px, transparent 2px 4px);
    z-index: 3;
}

.corner.bl {
    left: 0;
    bottom: 0;
    clip-path: polygon(0 0, 100% 100%, 0 100%);
}

.corner.tr {
    right: 0;
    top: 0;
    clip-path: polygon(0 0, 100% 0, 100% 100%);
}

/* widgets */
.wg {
    height: 20px;
    border: 1px solid #303030;
    border-radius: 5px;
    display: flex;
    align-items: center;
    flex: none;
    white-space: nowrap;
}

.hdr .wg, .hdr .layers {
    height: 19px;
}

.tool {
    background: linear-gradient(#9a9a9a, #7d7d7d);
}

.field {
    background: linear-gradient(#8e8e8e, #b6b6b6);
}

.num {
    background: linear-gradient(#979797, #b5b5b5);
}

.dark {
    background: linear-gradient(#5a5a5a, #3c3c3c);
    color: #ececec;
}

.blue {
    background: linear-gradient(#6b97d6, #4a76b6);
    color: #111;
}

.pad {
    padding-left: 7px;
}

.ctr {
    justify-content: center;
}

.ed {
    justify-content: center;
    gap: 1px;
}

.dd {
    justify-content: space-between;
    padding: 0 3px 0 7px;
}

.group {
    display: flex;
    flex: none;
}

.group > .wg {
    border-radius: 0;
    border-left-width: 0;
}

.group > .wg:first-child {
    border-radius: 5px 0 0 5px;
    border-left-width: 1px;
}

.group > .wg:last-child {
    border-radius: 0 5px 5px 0;
}

.fill {
    flex: 1;
}

.w19 { width: 19px; }
.w20 { width: 20px; }
.w21 { width: 21px; }
.w24 { width: 24px; }
.w28 { width: 28px; }
.w30 { width: 30px; }
.w31 { width: 31px; }
.w32 { width: 32px; }
.w33 { width: 33px; }
.w34 { width: 34px; }
.w61 { width: 61px; }
.w78 { width: 78px; }
.w89 { width: 89px; }
.w90 { width: 90px; }
.w109 { width: 109px; }
.w115 { width: 115px; }
.w117 { width: 117px; }
.w118 { width: 118px; }
.w120 { width: 120px; }
.w121 { width: 121px; }
.w130 { width: 130px; }
.w147 { width: 147px; }

.ml5 { margin-left: 5px; }
.ml6 { margin-left: 6px; }
.ml16 { margin-left: 16px; }
.mt1 { margin-top: 1px; }
.mt3 { margin-top: 3px; }
.mt4 { margin-top: 4px; }
.mt5 { margin-top: 5px; }
.mt6 { margin-top: 6px; }
.mt8 { margin-top: 8px; }
.mt9 { margin-top: 9px; }
.mt10 { margin-top: 10px; }
.mt13 { margin-top: 13px; }
.mb2 { margin-bottom: 2px; }
.mb3 { margin-bottom: 3px; }
.mb5 { margin-bottom: 5px; }

.users {
    color: #4e4e4e;
    background: #9b9b9b;
}

/* stacked rows */
.col {
    border: 1px solid #303030;
    border-radius: 5px;
    overflow: hidden;
    flex: none;
}

.col.round {
    border-radius: 8px;
}

.row {
    height: 19px;
    display: flex;
    align-items: center;
    padding-left: 7px;
}

.row.ctr {
    padding-left: 0;
}

.row + .row {
    border-top: 1px solid #303030;
}

.num {
    padding: 0 5px;
}

.num::before {
    content: "";
    border: 3px solid transparent;
    border-left-width: 0;
    border-right: 4px solid #6c6c6c;
    flex: none;
}

.num::after {
    content: "";
    border: 3px solid transparent;
    border-right-width: 0;
    border-left: 4px solid #6c6c6c;
    flex: none;
}

.lab {
    margin-left: 6px;
    margin-right: auto;
}

.val {
    margin-left: auto;
    margin-right: 7px;
    font-family: "DejaVu Sans", sans-serif;
}

.num.single {
    border-radius: 8px;
}

.lbl {
    height: 14px;
    padding-left: 7px;
    color: #1c1c1c;
    white-space: nowrap;
}

.off {
    opacity: .55;
}

.sep {
    height: 2px;
    margin: 8px -3px 0;
    border-top: 1px solid #4c4c4c;
    border-bottom: 1px solid #848484;
}

/* panel heading */
.ph {
    display: flex;
    align-items: center;
    height: 21px;
    margin-bottom: 10px;
    font-size: 12px;
    white-space: nowrap;
}

.ph.first {
    margin-top: 1px;
}

.ph.last {
    margin-top: -1px;
}

.arr {
    width: 0;
    height: 0;
    margin: 0 3px 0 5px;
    border-left: 4.5px solid transparent;
    border-right: 4.5px solid transparent;
    border-top: 8px solid #1c1c1c;
}

.arr.closed {
    margin: 0 4px 0 5px;
    border-top: 4.5px solid transparent;
    border-bottom: 4.5px solid transparent;
    border-left: 8px solid #1c1c1c;
    border-right: none;
}

.grip {
    width: 11px;
    height: 6px;
    margin-left: auto;
    margin-right: 3px;
    background: radial-gradient(circle, #b4b4b4 35%, transparent 45%) 0 0 / 3px 3px;
}

/* frame */
.workspace {
    display: flex;
    height: 1030px;
}

.left {
    width: 1461px;
    border-right: 1px solid #0c0c0c;
    display: flex;
    flex-direction: column;
}

.main {
    display: flex;
    height: 905px;
    flex: none;
}

/* tool shelf */
.tools {
    width: 160px;
    display: flex;
    flex-direction: column;
    border-right: 1px solid #5c5c5c;
    flex: none;
}

.tools-top {
    display: flex;
    height: 689px;
    flex: none;
}

.tabs {
    width: 20px;
    padding-top: 6px;
    display: flex;
    flex-direction: column;
    gap: 5px;
    background-color: #4c4c4c;
    flex: none;
}

.tab {
    width: 17px;
    margin-left: 2px;
    writing-mode: vertical-rl;
    text-orientation: sideways;
    transform: rotate(180deg);
    display: flex;
    align-items: center;
    justify-content: center;
    background-color: #616161;
    border-radius: 0 5px 5px 0;
    line-height: 17px;
    color: #161616;
    white-space: nowrap;
}

.tab.on {
    background-color: #727272;
    width: 18px;
}

.h44 { height: 44px; }
.h33 { height: 33px; }
.h87 { height: 87px; }
.h55 { height: 55px; }
.h103 { height: 103px; }
.g7 { margin-top: 2px; }

.tpanel {
    flex: 1;
    padding: 0 8px;
    background-color: #727272;
    overflow: hidden;
}

.redo {
    position: relative;
    height: 216px;
    padding: 0 25px 0 9px;
    background-color: #727272;
    border-top: 1px solid #5a5a5a;
    overflow: hidden;
    flex: none;
}

.redo .ph {
    height: 22px;
    margin-bottom: 0;
}

.redo .lbl {
    padding-left: 6px;
}

.scroll {
    position: absolute;
    display: block;
    width: 13px;
    background-color: #5c5c5c;
    border-radius: 7px;
    box-shadow: inset 0 0 0 1px #4e4e4e;
}

.thumb {
    position: absolute;
    left: 0;
    width: 13px;
    background: linear-gradient(90deg, #7a7a7a, #959595 50%, #7a7a7a);
    border-radius: 7px;
    box-shadow: inset 0 0 0 1px #5a5a5a;
}

.redo-scroll {
    left: 141px;
    top: 5px;
    height: 207px;
}

.redo-scroll .thumb {
    top: 0;
    height: 97px;
}

.cbrow {
    display: flex;
    align-items: center;
    height: 20px;
    gap: 8px;
    padding-left: 2px;
    color: #1c1c1c;
    white-space: nowrap;
}

.cbrow.lit {
    color: #f0f0f0;
}

.cb {
    width: 14px;
    height: 14px;
    border: 1px solid #2c2c2c;
    border-radius: 3px;
    background: linear-gradient(#3f3f3f, #5c5c5c);
    flex: none;
    display: block;
}

.cb svg {
    display: block;
    width: 14px;
    height: 14px;
    margin-top: -2px;
}

/* viewport */
.viewport {
    position: relative;
    flex: 1;
    background-color: #393939;
    overflow: hidden;
}

.scene3d {
    position: absolute;
    left: 0;
    top: 0;
    width: 1108px;
    height: 905px;
}

.gl {
    stroke: #4c4c4c;
    stroke-width: 1;
}

.gl.xa {
    stroke: #792424;
}

.gl.ya {
    stroke: #247a24;
}

.axl {
    font: 11px "Noto Sans", sans-serif;
}

.vp-title {
    position: absolute;
    left: 19px;
    top: 10px;
    color: #f0f0f0;
}

.vp-obj {
    position: absolute;
    left: 69px;
    top: 884px;
    color: #f0f0f0;
}

/* properties shelf */
.npanel {
    position: relative;
    width: 193px;
    padding: 0 25px 0 9px;
    background-color: #727272;
    border-left: 1px solid #5a5a5a;
    overflow: hidden;
    flex: none;
}

.n-scroll {
    left: 174px;
    top: 5px;
    height: 896px;
}

.n-scroll .thumb {
    top: 60px;
    height: 660px;
}

.xf {
    display: grid;
    grid-template-columns: 118px 31px;
    gap: 9px;
}

.xf.first {
    margin-top: -9px;
}

.xf .col:last-child {
    border-radius: 5px;
}

.lbl.nl {
    padding-left: 6px;
    margin-top: 7px;
    margin-bottom: 3px;
}

.lbl.nl.tight { margin-top: 5px; }
.lbl.nl.mt4 { margin-top: 4px; }
.lbl.nl.mt6 { margin-top: 6px; }
.lbl.nl.mt9 { margin-top: 9px; }
.lbl.nl.mt13 { margin-top: 13px; }
.lbl.nl.mb5 { margin-bottom: 5px; }
.lbl.nl.mb2 { margin-bottom: 2px; }

.sep.ns {
    margin: 7px -4px 0;
    width: 165px;
}

.sep.near {
    margin-top: 0;
}

.ph.nh {
    height: 22px;
    margin-bottom: 9px;
}

.ph.nh .arr {
    margin-left: 4px;
}

.hcb {
    margin-right: 6px;
}

.addnew {
    padding-left: 4px;
}

.addnew span {
    flex: 1;
    text-align: center;
    padding-right: 4px;
}

.picker {
    justify-content: space-between;
    padding: 0 3px;
}

.pick-name {
    flex: 1;
    padding-left: 5px;
}

.cbrow.nc {
    gap: 9px;
}

.item {
    display: flex;
    align-items: center;
    gap: 8px;
    padding-left: 3px;
}

.item .fill {
    padding-left: 7px;
}

/* bottom bars */
.modesel {
    padding-left: 4px;
}

.modesel span {
    flex: 1;
    padding-left: 3px;
}

.layers {
    display: grid;
    grid-template-columns: repeat(5, 10px);
    grid-template-rows: 1fr 1fr;
    width: 50px;
    border: 1px solid #333;
    border-radius: 4px;
    background-color: #8f8f8f;
    overflow: hidden;
    flex: none;
}

.layers i {
    border-right: 1px solid #4d4d4d;
    border-bottom: 1px solid #4d4d4d;
}

.layers .has {
    background: radial-gradient(circle, #e88a20 2.5px, transparent 3px);
}

.timeline {
    position: relative;
    height: 55px;
    border-top: 1px solid #0c0c0c;
    flex: none;
    background:
        repeating-linear-gradient(90deg, transparent 0 35.5px, rgba(0, 0, 0, .24) 35.5px 36.5px, transparent 36.5px 42.6px),
        repeating-linear-gradient(90deg, transparent 0 14.2px, rgba(0, 0, 0, .09) 14.2px 15.2px, transparent 15.2px 42.6px),
        linear-gradient(90deg, #454545 0 248px, #1c1c1c 248px 249px, #454545 249px 252px, #707070 252px 761px, #454545 761px);
}

.playhead {
    position: absolute;
    left: 516px;
    top: 0;
    width: 3px;
    height: 54px;
    background-color: #5cc13a;
}

.ruler {
    height: 17px;
    padding: 1px 4px 0;
    background-color: #6e6e6e;
    border-top: 1px solid #8a8a8a;
    border-bottom: 1px solid #585858;
    flex: none;
}

.pill {
    position: relative;
    display: flex;
    height: 13px;
    width: 1452px;
    padding-left: 8.5px;
    border: 1px solid #3c3c3c;
    border-radius: 7px;
    background: linear-gradient(#9c9c9c, #b6b6b6);
    overflow: hidden;
    font: 11px/11px "DejaVu Sans", sans-serif;
}

.pill span {
    width: 42.6px;
    text-align: center;
    flex: none;
}

.knob {
    position: absolute;
    left: 0;
    top: 0;
    width: 10px;
    height: 11px;
    border-radius: 6px;
    background-color: #6f6f6f;
}

.col-frames .lab {
    margin-left: 7px;
}

.col-frames .wg:first-child {
    border-radius: 9px 0 0 9px;
}

.col-frames .wg:last-child {
    border-radius: 0 9px 9px 0;
}

.transport {
    margin-left: 17px;
}

.keyset {
    padding-left: 2px;
}

/* right side */
.right {
    flex: 1;
    display: flex;
    flex-direction: column;
    min-width: 0;
}

.outliner {
    position: relative;
    height: 179px;
    border-bottom: 1px solid #0c0c0c;
    flex: none;
}

.hout {
    padding-left: 10px;
    height: 26px;
    border-top: none;
    border-bottom: 1px solid #5e5e5e;
}

.rows {
    position: relative;
    padding-top: 2px;
    height: 152px;
    overflow: hidden;
}

.orow {
    display: flex;
    height: 20px;
    background-color: #727272;
}

.orow.alt {
    background-color: #6d6d6d;
}

.orow > i {
    width: 20px;
    border-left: 1px solid #626262;
    display: flex;
    align-items: center;
    justify-content: center;
    flex: none;
}

.oname {
    flex: 1;
    display: flex;
    align-items: center;
    gap: 3px;
    white-space: nowrap;
}

.oname.sel {
    background-color: #7f8a90;
}

.white {
    color: #f4f4f4;
}

.exp {
    position: relative;
    width: 9px;
    height: 9px;
    border-radius: 50%;
    border: 1px solid #222;
    background:
        linear-gradient(#222, #222) center / 5px 1px no-repeat,
        linear-gradient(#222, #222) center / 1px 5px no-repeat,
        #bdbdbd;
    flex: none;
}

.exp.minus {
    background:
        linear-gradient(#222, #222) center / 5px 1px no-repeat,
        #bdbdbd;
}

.l-scene { padding-left: 5px; }
.l-scene .exp { margin-right: 3px; }

.l-rl { padding-left: 28px; }
.l-rl .exp { margin-right: 2px; }
.l-rl > .ic { margin-right: 1px; }

.l-world { padding-left: 38px; }

.l-obj { padding-left: 23px; }
.l-obj .exp { margin-right: 7px; }
.l-obj .exp::after {
    content: "";
    position: absolute;
    left: 8px;
    top: 3px;
    width: 8px;
    height: 1px;
    background-color: #3f3f3f;
}

.halo {
    width: 20px;
    height: 20px;
    border-radius: 50%;
    background-color: rgba(255, 255, 255, .25);
    display: flex;
    align-items: center;
    justify-content: center;
    flex: none;
}

.halo.orange {
    background-color: #a87a4e;
    margin-left: -2px;
}

.bar {
    width: 2px;
    height: 11px;
    margin: 0 6px;
    background-color: #555;
    flex: none;
}

.treeline {
    position: absolute;
    left: 27px;
    top: 20px;
    width: 1px;
    height: 90px;
    background-color: #3f3f3f;
}

.props {
    position: relative;
    flex: 1;
}

.hprops {
    height: 27px;
    padding-left: 10px;
    border-top: none;
    border-bottom: 1px solid #5e5e5e;
}

.hprops .wg {
    height: 20px;
}

.ptabs {
    margin-left: 9px;
}

.crumbs {
    display: flex;
    align-items: center;
    height: 20px;
    margin-top: 8px;
    padding-left: 10px;
    gap: 3px;
}

.cr-scene {
    margin-left: 4px;
}

.crumb-arr {
    width: 0;
    height: 0;
    margin: 0 10px 0 4px;
    border-top: 3.5px solid transparent;
    border-bottom: 3.5px solid transparent;
    border-left: 4px solid #3e3e3e;
}

.cr-last {
    margin-left: 12px;
}

.slots {
    display: flex;
    gap: 9px;
    padding-left: 8px;
    margin-top: 16px;
    height: 60px;
}

.slotlist {
    position: relative;
    width: 353px;
    height: 42px;
    border: 1px solid #3c3c3c;
    border-radius: 4px;
    background-color: #7a7a7a;
}

.addsm {
    position: absolute;
    left: 9px;
    bottom: 4px;
    width: 12px;
    height: 12px;
}

.dbl {
    position: absolute;
    left: 178px;
    bottom: 7px;
    width: 15px;
    height: 4px;
    border-top: 1px solid #2a2a2a;
    border-bottom: 1px solid #2a2a2a;
}

.slotbtns {
    width: 19px;
    height: 59px;
    margin-top: 1px;
}

.minus-btn i {
    width: 11px;
    height: 3px;
    background-color: #eee;
    box-shadow: 0 0 0 1px #333;
}

.newmat {
    width: 241px;
    margin-left: 8px;
    margin-top: 5px;
}

.searchbox {
    padding-left: 2px;
}
```

FILE: grid.js
```js
// ground grid of the 3D view: 16 x 16 squares, projected from the corners read off the screen
var L = [203.8, 269.4], T = [804.5, 80.7], R1 = [990.4, 253.8], R2 = [261.1, 562.6];

var dx1 = T[0] - R1[0], dx2 = R2[0] - R1[0], sx = L[0] - T[0] + R1[0] - R2[0];
var dy1 = T[1] - R1[1], dy2 = R2[1] - R1[1], sy = L[1] - T[1] + R1[1] - R2[1];
var den = dx1 * dy2 - dx2 * dy1;
var g = (sx * dy2 - dx2 * sy) / den;
var h = (dx1 * sy - sx * dy1) / den;
var a = T[0] - L[0] + g * T[0], b = R2[0] - L[0] + h * R2[0];
var d = T[1] - L[1] + g * T[1], e = R2[1] - L[1] + h * R2[1];

function project(u, v) {
    var w = g * u + h * v + 1;
    return [(a * u + b * v + L[0]) / w, (d * u + e * v + L[1]) / w];
}

function addLine(p, q, cls) {
    var line = document.createElementNS('http://www.w3.org/2000/svg', 'line');
    line.setAttribute('x1', p[0]);
    line.setAttribute('y1', p[1]);
    line.setAttribute('x2', q[0]);
    line.setAttribute('y2', q[1]);
    line.setAttribute('class', cls);
    document.getElementById('grid').appendChild(line);
}

for (var i = 0; i <= 16; i++) {
    addLine(project(i / 16, 0), project(i / 16, 2), i === 8 ? 'gl ya' : 'gl');
    addLine(project(0, i / 8), project(1, i / 8), i === 8 ? 'gl xa' : 'gl');
}
```
